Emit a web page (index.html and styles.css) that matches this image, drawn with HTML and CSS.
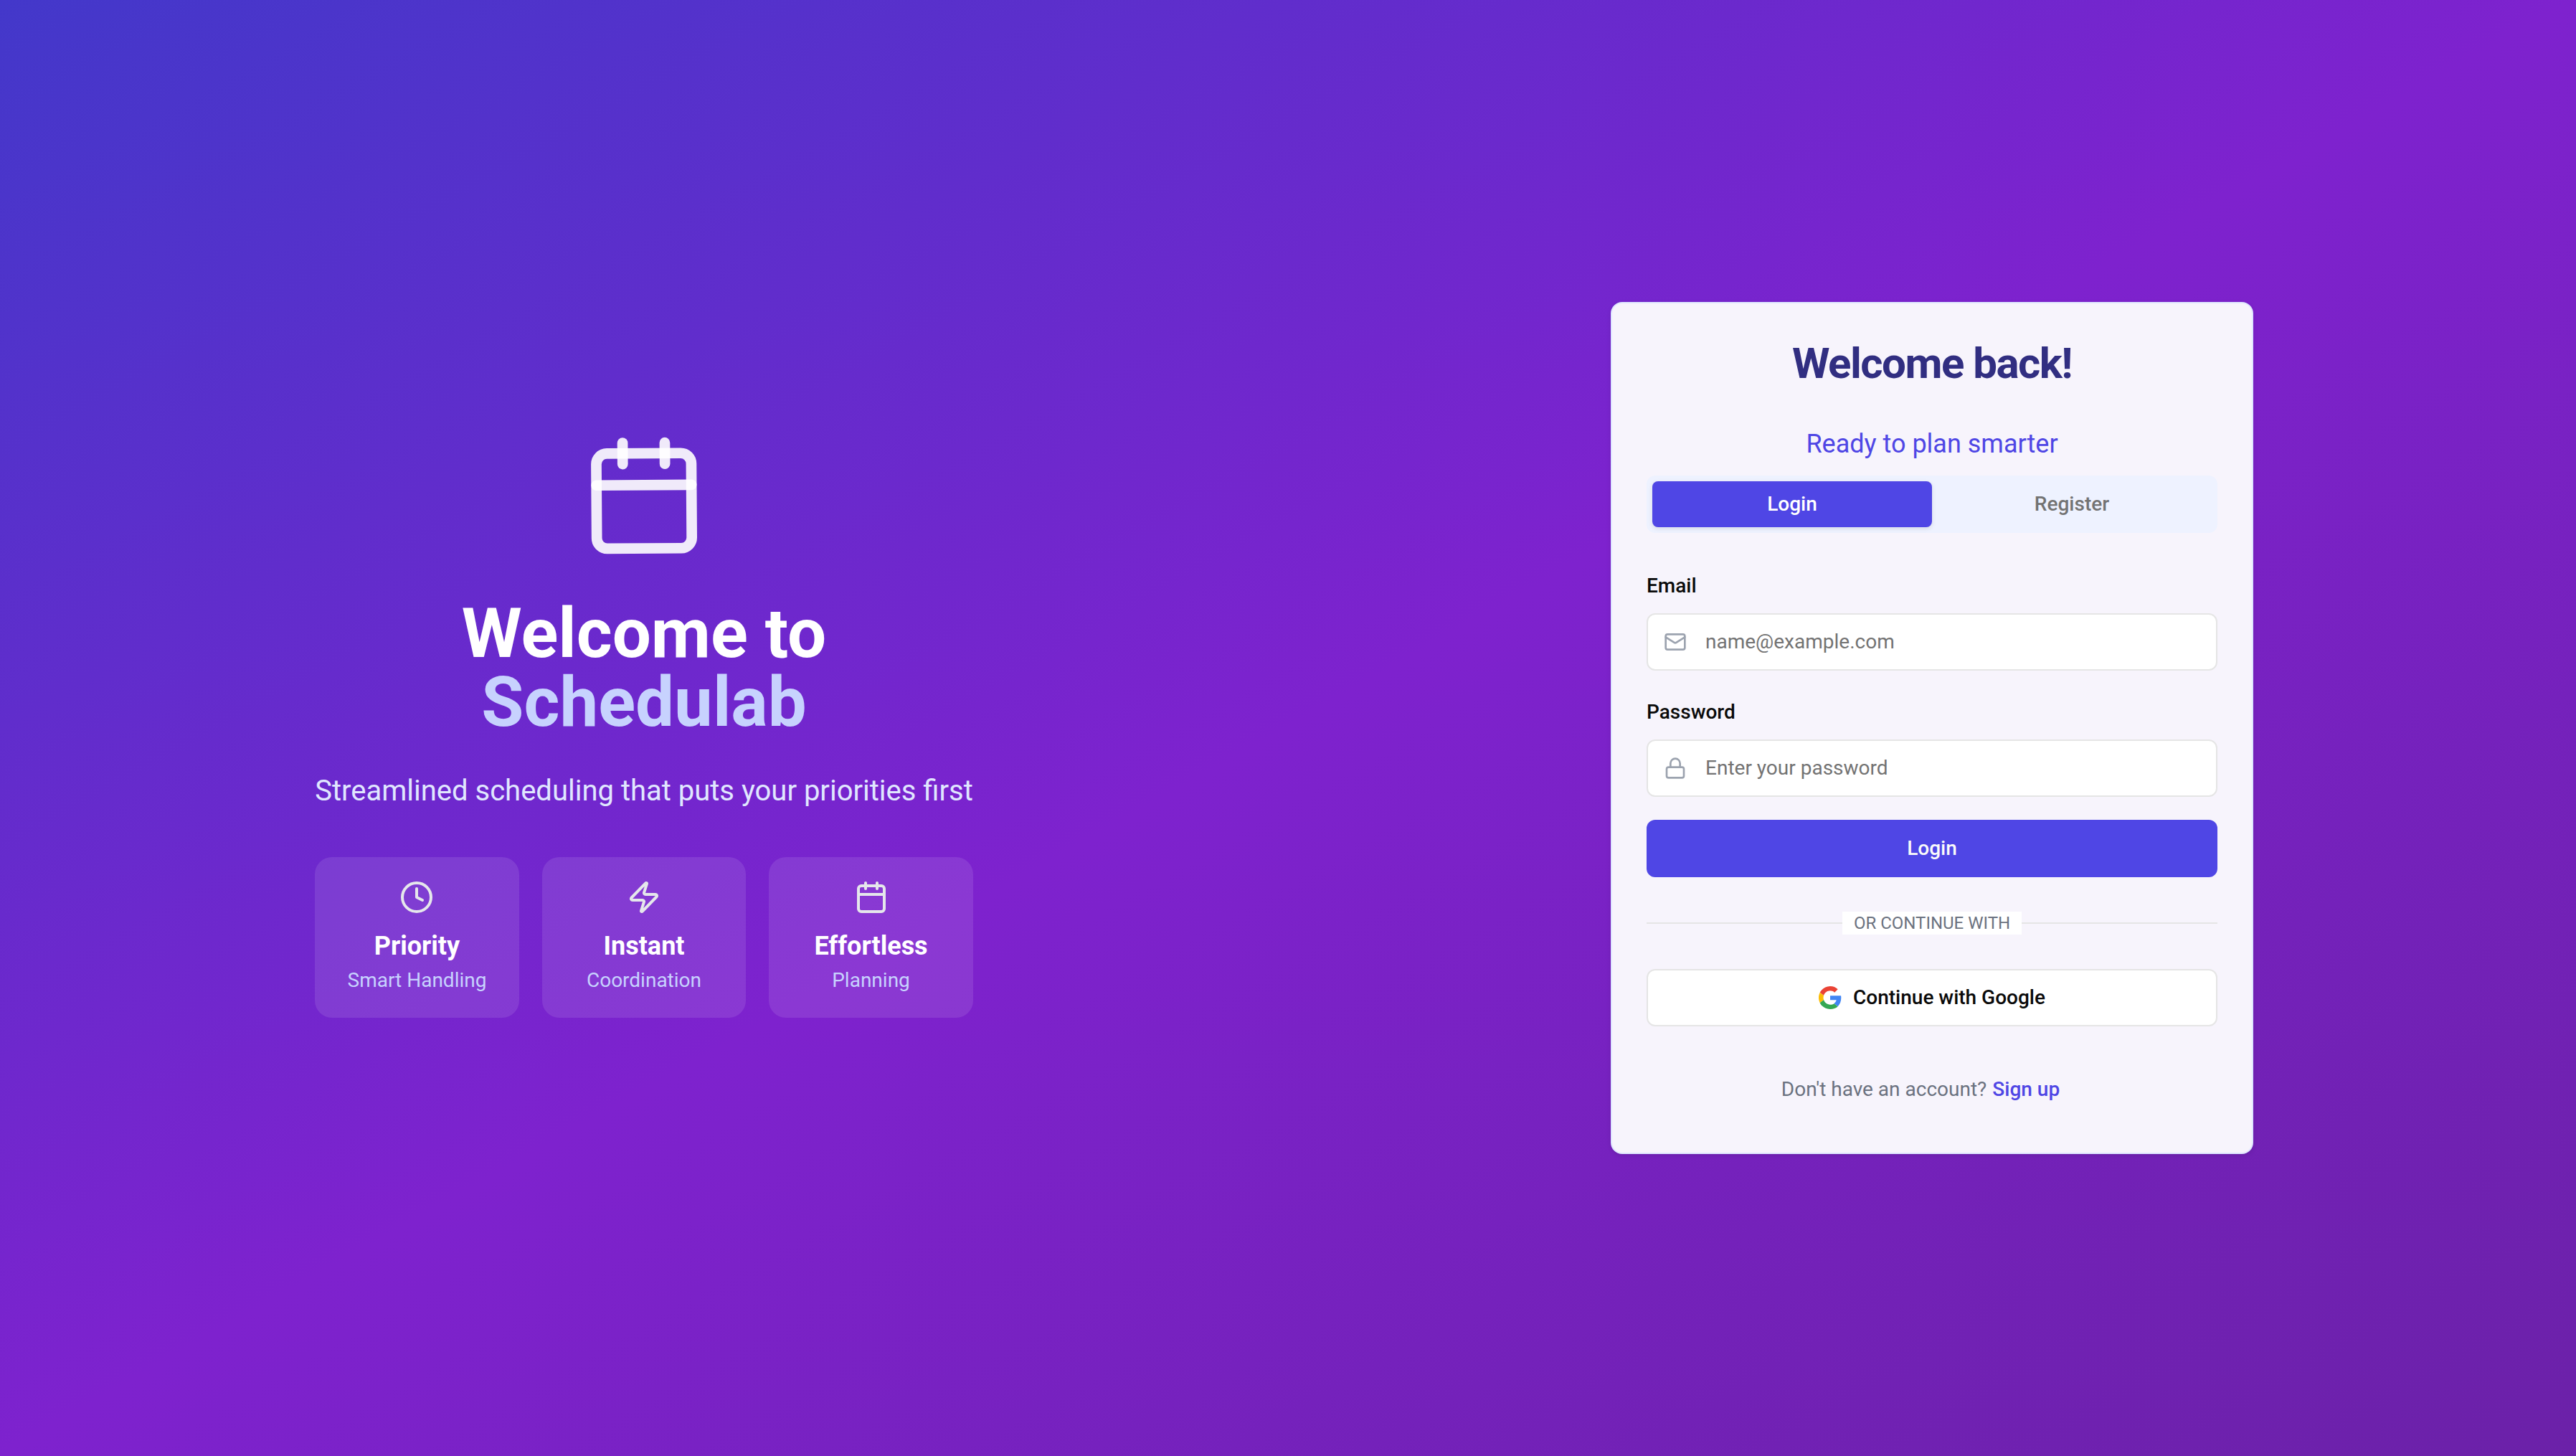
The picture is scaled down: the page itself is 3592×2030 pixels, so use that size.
FILE: index.html
```html
<!DOCTYPE html>
<html lang="en">
<head>
  <meta charset="utf-8">
  <meta name="viewport" content="width=device-width, initial-scale=1">
  <title>Schedulab</title>
  <link rel="stylesheet" href="styles.css">
</head>
<body>
  <main class="page">
    <section class="panel">
      <div class="hero">
        <svg class="hero-icon" viewBox="0 0 24 24" aria-hidden="true">
          <g transform="rotate(-0.4 12 12) translate(12 12) scale(1.104) translate(-12 -12)">
            <path d="M8 2v4"/><path d="M16 2v4"/><rect width="18" height="18" x="3" y="4" rx="2"/><path d="M3 10h18"/>
          </g>
        </svg>
        <h1 class="hero-title">Welcome to <span class="brand">Schedulab</span></h1>
        <p class="hero-text">Streamlined scheduling that puts your priorities first</p>
        <ul class="features">
          <li class="feature">
            <svg class="icon feature-icon" viewBox="0 0 24 24" aria-hidden="true"><circle cx="12" cy="12" r="10"/><polyline points="12 6 12 12 16 14"/></svg>
            <h2 class="feature-title">Priority</h2>
            <p class="feature-text">Smart Handling</p>
          </li>
          <li class="feature">
            <svg class="icon feature-icon" viewBox="0 0 24 24" aria-hidden="true"><path d="M4 14a1 1 0 0 1-.78-1.63l9.9-10.2a.5.5 0 0 1 .86.46l-1.92 6.02A1 1 0 0 0 13 10h7a1 1 0 0 1 .78 1.63l-9.9 10.2a.5.5 0 0 1-.86-.46l1.92-6.02A1 1 0 0 0 11 14z"/></svg>
            <h2 class="feature-title">Instant</h2>
            <p class="feature-text">Coordination</p>
          </li>
          <li class="feature">
            <svg class="icon feature-icon" viewBox="0 0 24 24" aria-hidden="true"><path d="M8 2v4"/><path d="M16 2v4"/><rect width="18" height="18" x="3" y="4" rx="2"/><path d="M3 10h18"/></svg>
            <h2 class="feature-title">Effortless</h2>
            <p class="feature-text">Planning</p>
          </li>
        </ul>
      </div>
    </section>

    <section class="panel">
      <div class="card">
        <h2 class="card-title">Welcome back!</h2>
        <p class="card-text">Ready to plan smarter</p>
        <div class="tabs" role="tablist">
          <button class="tab tab-active" type="button" role="tab" aria-selected="true">Login</button>
          <button class="tab" type="button" role="tab" aria-selected="false">Register</button>
        </div>
        <form class="form">
          <div class="field">
            <div class="label-row"><label class="label" for="email">Email</label></div>
            <div class="input-box">
              <svg class="icon input-icon" viewBox="0 0 24 24" aria-hidden="true"><rect width="20" height="16" x="2" y="4" rx="2"/><path d="m22 7-8.97 5.7a1.94 1.94 0 0 1-2.06 0L2 7"/></svg>
              <input class="input" id="email" type="email" placeholder="name@example.com">
            </div>
          </div>
          <div class="field">
            <div class="label-row"><label class="label" for="password">Password</label></div>
            <div class="input-box">
              <svg class="icon input-icon" viewBox="0 0 24 24" aria-hidden="true"><rect width="18" height="11" x="3" y="11" rx="2"/><path d="M7 11V7a5 5 0 0 1 10 0v4"/></svg>
              <input class="input" id="password" type="password" placeholder="Enter your password">
            </div>
          </div>
          <button class="button button-primary" type="submit">Login</button>
        </form>
        <div class="divider"><span class="divider-label">Or continue with</span></div>
        <button class="button button-outline" type="button">
          <svg class="google-icon" viewBox="0 0 48 48" aria-hidden="true">
            <path fill="#ea4335" d="M24 9.5c3.54 0 6.71 1.22 9.21 3.6l6.85-6.85C35.9 2.38 30.47 0 24 0 14.62 0 6.51 5.38 2.56 13.22l7.98 6.19C12.43 13.72 17.74 9.5 24 9.5z"/>
            <path fill="#4285f4" d="M46.98 24.55c0-1.57-.15-3.09-.38-4.55H24v9.02h12.94c-.58 2.96-2.26 5.48-4.78 7.18l7.73 6c4.51-4.18 7.09-10.36 7.09-17.65z"/>
            <path fill="#fbbc05" d="M10.53 28.59c-.48-1.45-.76-2.99-.76-4.59s.27-3.14.76-4.59l-7.98-6.19C.92 16.46 0 20.12 0 24c0 3.88.92 7.54 2.56 10.78l7.97-6.19z"/>
            <path fill="#34a853" d="M24 48c6.48 0 11.93-2.13 15.89-5.81l-7.73-6c-2.15 1.45-4.92 2.3-8.16 2.3-6.26 0-11.57-4.22-13.47-9.91l-7.98 6.19C6.51 42.62 14.62 48 24 48z"/>
          </svg>
          Continue with Google
        </button>
        <div class="card-footer">
          <span>Don't have an account?</span>
          <a class="signup" href="#register">Sign up</a>
        </div>
      </div>
    </section>
  </main>
</body>
</html>
```

FILE: styles.css
```css
*,
*::before,
*::after {
  box-sizing: border-box;
}

body {
  margin: 0;
  font-family: Roboto, "Liberation Sans", sans-serif;
  font-size: 32px;
  line-height: 48px;
  color: #0a0a0a;
}

h1,
h2,
p,
ul {
  margin: 0;
  padding: 0;
}

button,
input {
  font: inherit;
  color: inherit;
}

.page {
  display: grid;
  grid-template-columns: repeat(auto-fit, minmax(min(100%, 1100px), 1fr));
  min-height: 100vh;
  background: linear-gradient(to bottom right, #4338ca, #7e22ce, #6b21a8);
}

.panel {
  display: flex;
  align-items: center;
  justify-content: center;
  padding: 64px;
}

.icon {
  flex: none;
  fill: none;
  stroke: currentColor;
  stroke-width: 2;
  stroke-linecap: round;
  stroke-linejoin: round;
}

/* Introduction */

.hero {
  display: flex;
  flex-direction: column;
  align-items: center;
  text-align: center;
}

.hero-icon {
  width: 160px;
  height: 160px;
  margin-bottom: 64px;
  overflow: visible;
  fill: none;
  stroke: rgba(255, 255, 255, 0.9);
  stroke-width: 2;
  stroke-linecap: round;
  stroke-linejoin: round;
}

.hero-title {
  margin-bottom: 48px;
  font-size: 96px;
  line-height: 96px;
  font-weight: 700;
  color: #fff;
}

.brand {
  display: block;
  color: #c7d2fe;
}

.hero-text {
  margin-bottom: 64px;
  font-size: 40px;
  line-height: 56px;
  color: #e0e7ff;
}

.features {
  display: grid;
  grid-template-columns: repeat(3, 1fr);
  gap: 32px;
  width: 100%;
  list-style: none;
}

.feature {
  display: flex;
  flex-direction: column;
  align-items: center;
  padding: 32px;
  border-radius: 24px;
  background: rgba(255, 255, 255, 0.1);
}

.feature-icon {
  width: 48px;
  height: 48px;
  margin-bottom: 16px;
  color: #e5e7eb;
}

.feature-title {
  font-size: 36px;
  line-height: 56px;
  font-weight: 700;
  color: #fff;
}

.feature-text {
  font-size: 28px;
  line-height: 40px;
  color: #c7d2fe;
}

/* Sign-in card */

.card {
  width: 100%;
  max-width: 896px;
  padding: 48px;
  border: 2px solid #e0e7ff;
  border-radius: 16px;
  background: #f7f4fc;
  box-shadow: 0 2px 6px rgba(0, 0, 0, 0.1);
}

.card-title {
  margin-bottom: 48px;
  font-size: 60px;
  line-height: 72px;
  font-weight: 700;
  letter-spacing: -0.025em;
  text-align: center;
  color: #312e81;
}

.card-text {
  margin-bottom: 16px;
  font-size: 36px;
  line-height: 56px;
  text-align: center;
  color: #4f46e5;
}

.tabs {
  display: grid;
  grid-template-columns: 1fr 1fr;
  margin-bottom: 48px;
  padding: 8px;
  border-radius: 12px;
  background: #eef2ff;
}

.tab {
  padding: 12px 24px;
  border: 0;
  border-radius: 8px;
  background: none;
  font-size: 28px;
  line-height: 40px;
  font-weight: 500;
  color: #737373;
}

.tab-active {
  background: #4f46e5;
  color: #fff;
  box-shadow: 0 2px 6px rgba(0, 0, 0, 0.1);
}

.form {
  display: flex;
  flex-direction: column;
  gap: 32px;
}

.field {
  display: flex;
  flex-direction: column;
  gap: 16px;
}

.label {
  font-size: 28px;
  line-height: 28px;
  font-weight: 500;
}

.input-box {
  display: flex;
  align-items: center;
  gap: 26px;
  height: 80px;
  padding: 0 22px;
  border: 2px solid #e5e5e5;
  border-radius: 12px;
  background: #fff;
}

.input-icon {
  width: 32px;
  height: 32px;
  color: #9ca3af;
}

.input {
  flex: 1;
  min-width: 0;
  padding: 0;
  border: 0;
  outline: 0;
  background: none;
  font-size: 28px;
  line-height: 40px;
}

.input::placeholder {
  color: #737373;
  opacity: 1;
}

.button {
  display: flex;
  align-items: center;
  justify-content: center;
  gap: 16px;
  width: 100%;
  height: 80px;
  padding: 0 32px;
  border: 0;
  border-radius: 12px;
  font-size: 28px;
  line-height: 40px;
  font-weight: 500;
}

.button-primary {
  background: #4f46e5;
  color: #fafafa;
}

.button-outline {
  border: 2px solid #e5e5e5;
  background: #fff;
}

.google-icon {
  width: 32px;
  height: 32px;
}

.divider {
  display: flex;
  align-items: center;
  margin: 48px 0;
}

.divider::before,
.divider::after {
  content: "";
  flex: 1;
  height: 2px;
  background: #e5e5e5;
}

.divider-label {
  padding: 0 16px;
  background: #fff;
  font-size: 24px;
  line-height: 32px;
  text-transform: uppercase;
  color: #6b7280;
}

.card-footer {
  display: flex;
  align-items: center;
  justify-content: center;
  height: 80px;
  margin-top: 48px;
  font-size: 28px;
  line-height: 40px;
  color: #6b7280;
}

.signup {
  padding: 0 32px 0 8px;
  font-weight: 500;
  text-decoration: none;
  color: #4f46e5;
}
```
